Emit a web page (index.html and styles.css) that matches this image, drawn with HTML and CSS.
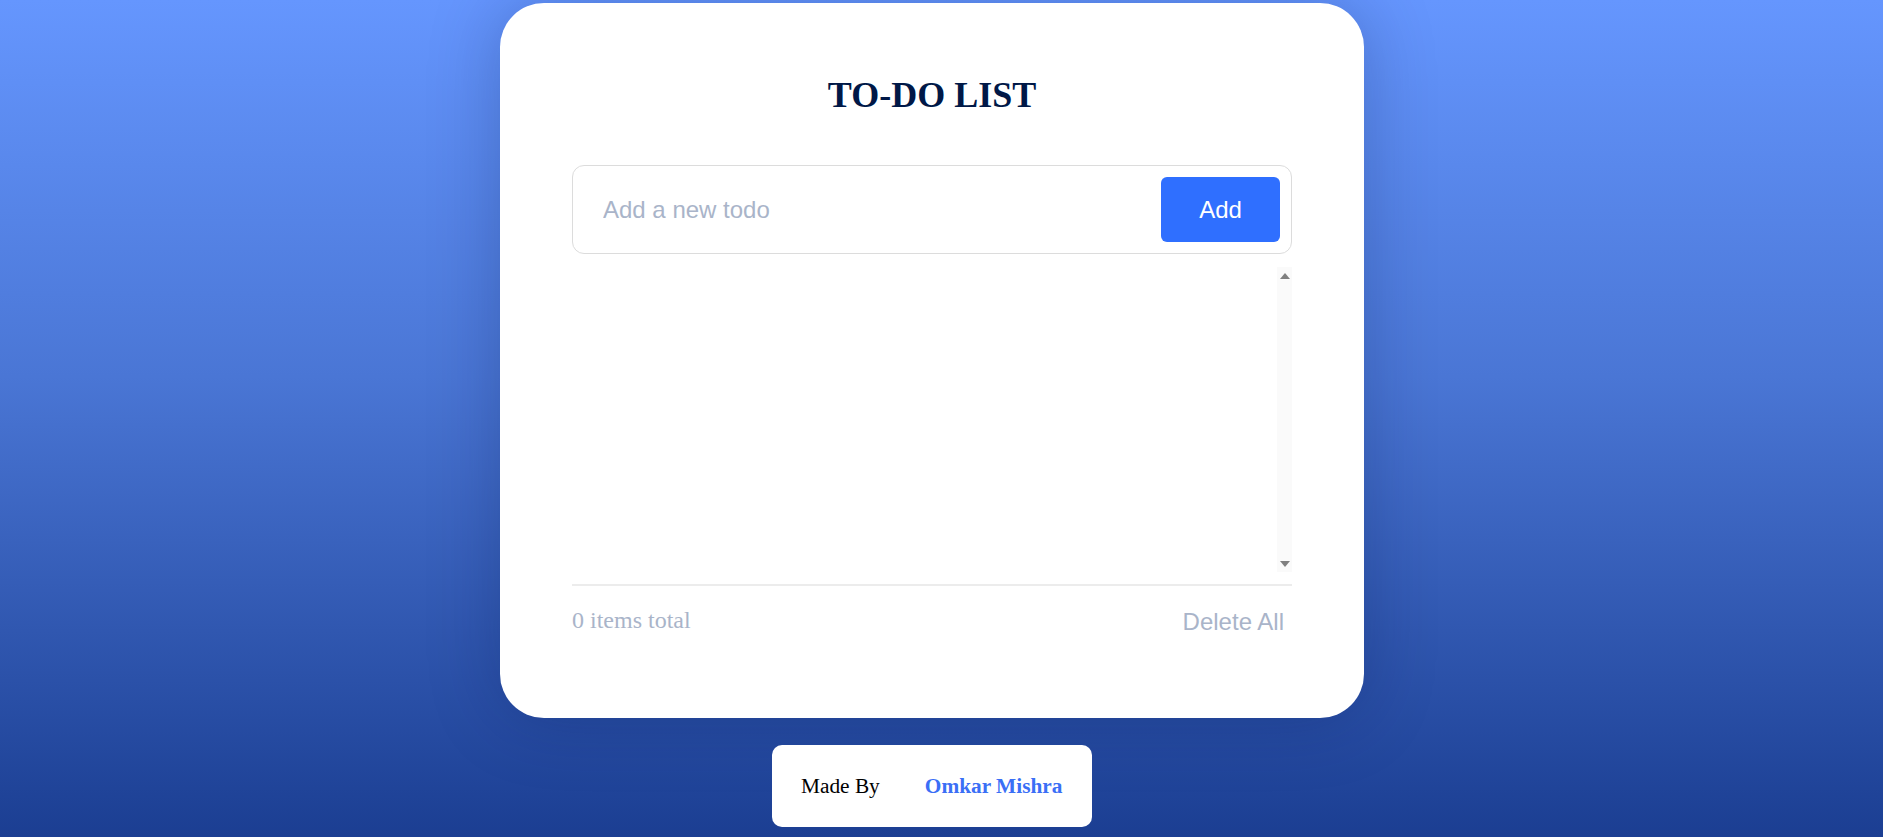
FILE: index.html
```html
<!DOCTYPE html>
<html lang="en">
<head>
<meta charset="utf-8">
<title>To-Do List</title>
<link rel="stylesheet" href="styles.css">
</head>
<body>
<main class="page">
  <section class="card">
    <h1 class="title">TO-DO LIST</h1>
    <form class="add-row">
      <input class="add-input" type="text" placeholder="Add a new todo">
      <button class="add-btn" type="button">Add</button>
    </form>
    <div class="list-wrap">
      <ul class="todo-list"></ul>
      <div class="scrollbar" aria-hidden="true">
        <span class="arrow arrow-up"></span>
        <span class="arrow arrow-down"></span>
      </div>
    </div>
    <div class="card-footer">
      <span class="count">0 items total</span>
      <button class="delete-all" type="button">Delete All</button>
    </div>
  </section>
  <div class="credit">
    <span class="made-by">Made By</span>
    <span class="author">Omkar Mishra</span>
  </div>
</main>
</body>
</html>
```
FILE: styles.css
```css
html, body {
  margin: 0;
  padding: 0;
  height: 100%;
}

body {
  background: linear-gradient(180deg, #6596fe 0%, #4a76d5 45%, #1b3e92 100%);
  font-family: "Liberation Serif", "Times New Roman", serif;
  overflow: hidden;
}

.page {
  width: 1864px;
  box-sizing: border-box;
  padding-top: 3px;
  display: flex;
  flex-direction: column;
  align-items: center;
}

.card {
  width: 864px;
  box-sizing: border-box;
  padding: 72px 72px 75px;
  background: #fff;
  border-radius: 44px;
  box-shadow: 0 0 70px rgba(0, 20, 70, 0.25);
  display: flex;
  flex-direction: column;
}

.title {
  margin: 0;
  font-size: 36px;
  line-height: 40px;
  font-weight: 700;
  text-align: center;
  color: #001847;
}

.add-row {
  margin: 50px 0 0;
  height: 89px;
  box-sizing: border-box;
  border: 1px solid #dcdcdc;
  border-radius: 12px;
  display: flex;
  align-items: center;
  padding: 0 11px 0 30px;
  gap: 12px;
}

.add-input {
  flex: 1;
  border: none;
  outline: none;
  background: transparent;
  font-family: "Liberation Sans", Arial, sans-serif;
  font-size: 24px;
  color: #333;
  padding: 0;
}

.add-input::placeholder {
  color: #a9b4c9;
}

.add-btn {
  width: 119px;
  height: 65px;
  border: none;
  border-radius: 6px;
  background: #2f6fff;
  color: #fff;
  font-family: "Liberation Sans", Arial, sans-serif;
  font-size: 24px;
  cursor: pointer;
}

.list-wrap {
  margin-top: 13px;
  height: 305px;
  display: flex;
}

.todo-list {
  flex: 1;
  list-style: none;
  margin: 0;
  padding: 0;
}

.scrollbar {
  width: 15px;
  background: #fafafa;
  box-sizing: border-box;
  padding: 6px 0 5px;
  display: flex;
  flex-direction: column;
  justify-content: space-between;
  align-items: center;
}

.arrow {
  width: 0;
  height: 0;
  border-left: 5px solid transparent;
  border-right: 5px solid transparent;
}

.arrow-up {
  border-bottom: 6px solid #808080;
}

.arrow-down {
  border-top: 6px solid #808080;
}

.card-footer {
  margin-top: 12px;
  border-top: 2px solid #ececec;
  padding-top: 11px;
  display: flex;
  align-items: center;
  justify-content: space-between;
}

.count {
  font-size: 24px;
  color: #a9b4c9;
}

.delete-all {
  border: none;
  background: transparent;
  padding: 11px 8px 7px;
  font-family: "Liberation Sans", Arial, sans-serif;
  font-size: 24px;
  color: #a9b4c9;
  cursor: pointer;
}

.credit {
  margin-top: 27px;
  width: 320px;
  height: 82px;
  box-sizing: border-box;
  background: #fff;
  border-radius: 10px;
  padding: 0 29px;
  display: flex;
  align-items: center;
  gap: 45px;
  font-size: 21.33px;
}

.made-by {
  color: #000;
}

.author {
  font-weight: 700;
  color: #3a6ff6;
}
```
